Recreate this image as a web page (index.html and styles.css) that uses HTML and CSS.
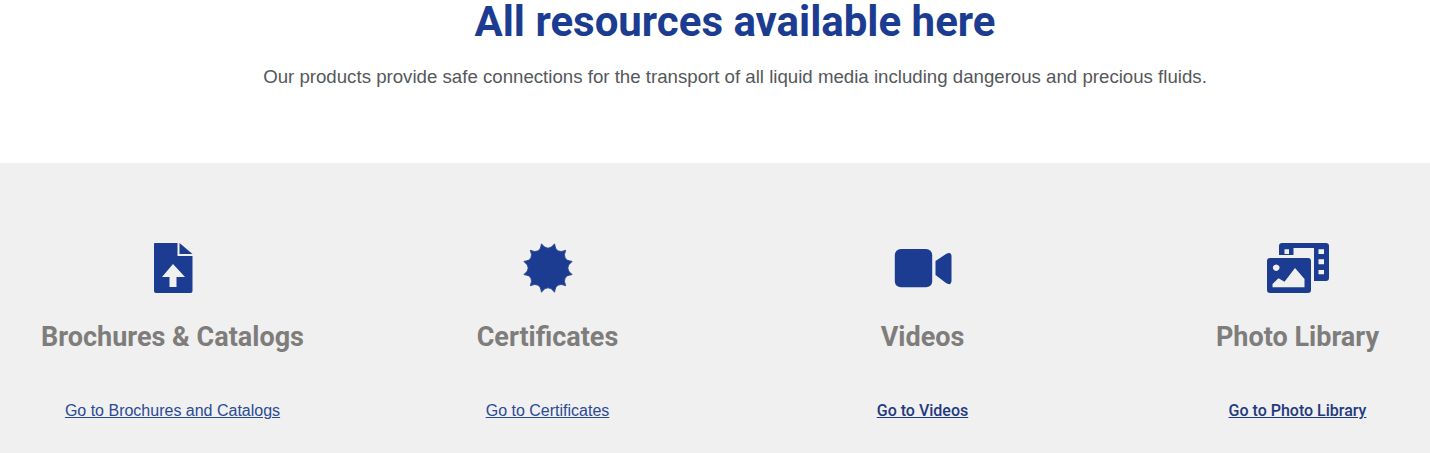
FILE: index.html
```html
<!DOCTYPE html>
<html lang="en">
<head>
<meta charset="UTF-8">
<title>Resources</title>
<link rel="stylesheet" href="styles.css">
</head>
<body>
<div class="page">
	<div class="intro">
		<h1>All resources available here</h1>
		<p>Our products provide safe connections for the transport of all liquid media including dangerous and precious fluids.</p>
	</div>
	<div class="resources">
		<div class="item">
			<svg class="icon" width="64" height="50" viewBox="0 0 64 50">
				<path fill="#1b3c90" fill-rule="evenodd" d="M14 0H36.500V13H51.500V48Q51.500 50 49.500 50H15Q13 50 13 48V1Q13 0 14 0ZM32 21L21 34H28.500V44H35.500V34H44Z"/>
				<path fill="#1b3c90" d="M38.500 0L51.500 11H38.500Z"/>
			</svg>
			<h2>Brochures &amp; Catalogs</h2>
			<a href="#">Go to Brochures and Catalogs</a>
		</div>
		<div class="item">
			<svg class="icon" width="64" height="50" viewBox="0 0 64 50">
				<path fill="#1b3c90" stroke="#1b3c90" stroke-width="0.8" stroke-linejoin="round" d="M25.500 0.850Q32 9.500 38.500 0.850Q39.750 11.600 49.700 7.300Q45.400 17.250 56.150 18.500Q47.500 25 56.150 31.500Q45.400 32.750 49.700 42.700Q39.750 38.400 38.500 49.150Q32 40.500 25.500 49.150Q24.250 38.400 14.300 42.700Q18.600 32.750 7.850 31.500Q16.500 25 7.850 18.500Q18.600 17.250 14.300 7.300Q24.250 11.600 25.500 0.850Z"/>
			</svg>
			<h2>Certificates</h2>
			<a href="#">Go to Certificates</a>
		</div>
		<div class="item">
			<svg class="icon" width="64" height="50" viewBox="0 0 64 50">
				<rect fill="#1b3c90" x="3.800" y="6" width="37.400" height="38.300" rx="6"/>
				<path fill="#1b3c90" d="M44.500 18L55 11Q60 8 60.500 13V38Q60 43 55 40L44.500 32Z"/>
			</svg>
			<h2>Videos</h2>
			<a class="strong" href="#">Go to Videos</a>
		</div>
		<div class="item">
			<svg class="icon" width="64" height="50" viewBox="0 0 64 50">
				<path fill="#1b3c90" fill-rule="evenodd" d="M16 0H60Q63 0 63 3V35Q63 38 60 38H48V5H27.500V12H13V3Q13 0 16 0ZM18.500 6.300V11H23V6.300ZM52.500 6.300V11H58V6.300ZM52.500 16.300V21.300H58V16.300ZM52.500 27V31.300H58V27Z"/>
				<path fill="#1b3c90" fill-rule="evenodd" d="M4 15H42Q45 15 45 18V47Q45 50 42 50H4Q1 50 1 47V18Q1 15 4 15ZM10.200 21.400A3.300 3.300 0 1 0 10.210 21.400ZM6.500 44.300H38.500V36L29 25L18.500 38.700L12.500 35.300L6.500 41Z"/>
			</svg>
			<h2>Photo Library</h2>
			<a class="strong" href="#">Go to Photo Library</a>
		</div>
	</div>
</div>
</body>
</html>
```

FILE: styles.css
```css
* {
	box-sizing: border-box;
	margin: 0;
	padding: 0;
}

html, body {
	overflow: hidden;
	height: 453px;
}

body {
	background: #fff;
	font-family: "Liberation Sans", Arial, sans-serif;
}

.page {
	width: 1470px;
}

.intro {
	height: 163px;
	padding-top: 1px;
	text-align: center;
}

h1 {
	color: #1b3c90;
	font: 700 42px/42px Roboto, sans-serif;
}

.intro p {
	color: #54585a;
	font-size: 18.67px;
	line-height: 26px;
	margin-top: 21px;
}

.resources {
	background: #f0f0f0;
	display: grid;
	grid-template-columns: repeat(4, 375px);
	height: 290px;
	margin: 0 -15px;
	padding-top: 80px;
	width: 1500px;
}

.item {
	display: flex;
	flex-direction: column;
	align-items: center;
}

h2 {
	color: #7f7d7b;
	font: 700 27px/32px Roboto, sans-serif;
	margin-top: 28px;
}

.item a {
	color: #2a4a94;
	font-size: 16px;
	line-height: 20px;
	margin-top: 48px;
}

.item a.strong {
	color: #23397f;
	font-family: Roboto, sans-serif;
	font-weight: 500;
}
```
